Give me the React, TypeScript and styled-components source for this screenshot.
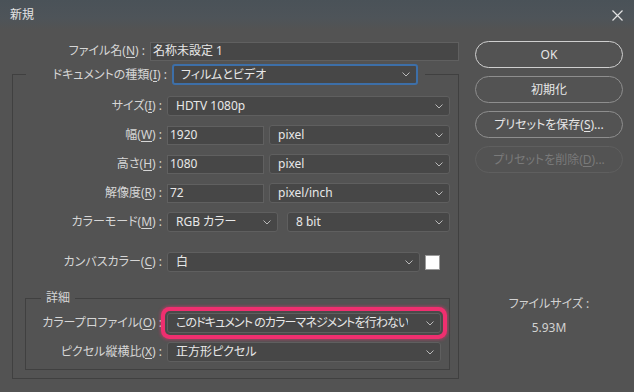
import React from 'react';
import styled, { createGlobalStyle, css } from 'styled-components';

const Global = createGlobalStyle`
  html, body { margin: 0; padding: 0; background: #535353; }
  body { font-family: "Noto Sans", "Noto Sans CJK JP", sans-serif; }
  #root { width: 634px; height: 392px; }
`;

const Window = styled.div`
  width: 634px;
  height: 392px;
  background: #535353;
  color: #d4d4d4;
  font-size: 12px;
  line-height: 16px;
  font-family: "Noto Sans", "Noto Sans CJK JP", sans-serif;
  font-feature-settings: "palt";
  overflow: hidden;
  display: flex;
  flex-direction: column;
`;

const TitleBar = styled.div`
  height: 30px;
  flex: none;
  display: flex;
  align-items: center;
  justify-content: space-between;
  padding: 0 11px 0 10px;
  background: linear-gradient(to bottom, #4a5258 0%, #4e5459 60%, #535353 100%);
  color: #e4e4e4;
`;

const Title = styled.span`
  font-size: 12px;
`;

const Body = styled.div`
  display: flex;
  padding: 11px 0 0 12px;
`;

const LeftCol = styled.div`
  width: 447px;
  display: flex;
  flex-direction: column;
`;

const Row = styled.div<{ $top?: number }>`
  display: flex;
  align-items: center;
  height: 20px;
  margin-top: ${(p) => p.$top ?? 0}px;
`;

const Label = styled.label<{ $w: number }>`
  width: ${(p) => p.$w}px;
  flex: none;
  box-sizing: border-box;
  text-align: right;
  padding-right: 5px;
  white-space: nowrap;
  color: #d6d6d6;
  u { text-underline-offset: 2px; }
`;

const TextInput = styled.div<{ $w: number }>`
  width: ${(p) => p.$w}px;
  height: 19px;
  flex: none;
  box-sizing: border-box;
  border: 1px solid #606060;
  background: #474747;
  color: #e8e8e8;
  padding-left: 2px;
  display: flex;
  align-items: center;
`;

const Select = styled.div<{ $w: number; $focus?: boolean; $hl?: boolean; $ml?: number }>`
  width: ${(p) => p.$w}px;
  height: 20px;
  flex: none;
  box-sizing: border-box;
  margin-left: ${(p) => p.$ml ?? 0}px;
  border: 1px solid #5f5f5f;
  border-radius: 3px;
  background: #474747;
  color: #e8e8e8;
  padding: 0 6px 0 8px;
  display: flex;
  align-items: center;
  justify-content: space-between;
  white-space: nowrap;
  ${(p) =>
    p.$focus &&
    css`
      border: 2px solid #3d6fa8;
      height: 21px;
      padding-left: 7px;
    `}
  ${(p) =>
    p.$hl &&
    css`
      box-shadow: 0 0 0 2px #4a4a4a, 0 0 0 6px #ef2f6f, 0 0 3px 7px rgba(239, 47, 111, 0.45);
    `}
`;

const SelectText = styled.span<{ $tight?: boolean }>`
  overflow: hidden;
  min-width: 0;
  letter-spacing: ${(p) => (p.$tight ? '-0.9px' : '0')};
`;

const Swatch = styled.div`
  width: 15px;
  height: 15px;
  margin-left: 5px;
  box-sizing: border-box;
  background: #ffffff;
  border: 1px solid #9a9a9a;
  flex: none;
`;

const Chevron = () => (
  <svg width="8" height="5" viewBox="0 0 8 5" style={{ flex: 'none', marginLeft: 4 }}>
    <path d="M0.5 0.5 L4 4 L7.5 0.5" fill="none" stroke="#b9b9b9" strokeWidth="1" />
  </svg>
);

const OuterGroup = styled.fieldset`
  margin: 3px 0 0 0;
  padding: 11px 8px 8px 0;
  width: 447px;
  box-sizing: border-box;
  border: 1px solid #404040;
  min-width: 0;
  display: flex;
  flex-direction: column;
  gap: 9px;
`;

const OuterLegend = styled.legend`
  margin-left: 13px;
  padding: 0 7px 0 0;
  display: flex;
  align-items: center;
  height: 21px;
`;

const InnerGroup = styled.fieldset`
  margin: 9px 0 0 12px;
  padding: 7px 8px 7px 0;
  width: 425px;
  box-sizing: border-box;
  border: 1px solid #404040;
  min-width: 0;
  display: flex;
  flex-direction: column;
  gap: 9px;
`;

const InnerLegend = styled.legend`
  margin-left: 15px;
  padding: 0 5px;
  color: #d6d6d6;
  line-height: 16px;
`;

const RightCol = styled.div`
  width: 148px;
  margin-left: 16px;
  display: flex;
  flex-direction: column;
  gap: 8px;
`;

const Button = styled.div<{ $primary?: boolean; $disabled?: boolean }>`
  height: 27px;
  box-sizing: border-box;
  border-radius: 14px;
  border: 1px solid ${(p) => (p.$primary ? '#cfcfcf' : p.$disabled ? '#5f5f5f' : '#8e8e8e')};
  color: ${(p) => (p.$disabled ? '#7a7a7a' : '#e6e6e6')};
  display: flex;
  align-items: center;
  justify-content: center;
  font-size: 12px;
  u { text-underline-offset: 2px; }
`;

const Info = styled.div`
  margin-top: 115px;
  display: flex;
  flex-direction: column;
  align-items: center;
  gap: 8px;
  color: #d2d2d2;
`;

const CloseIcon = () => (
  <svg width="11" height="11" viewBox="0 0 11 11">
    <path d="M0.5 0.5 L10.5 10.5 M10.5 0.5 L0.5 10.5" stroke="#e2e2e2" strokeWidth="1.2" fill="none" />
  </svg>
);

type Opt = { w: number; text: string; ml?: number; focus?: boolean; hl?: boolean; tight?: boolean };

const Dropdown = ({ w, text, ml, focus, hl, tight }: Opt) => (
  <Select $w={w} $ml={ml} $focus={focus} $hl={hl}>
    <SelectText $tight={tight}>{text}</SelectText>
    <Chevron />
  </Select>
);

export default function App() {
  return (
    <>
      <Global />
      <Window>
        <TitleBar>
          <Title>新規</Title>
          <CloseIcon />
        </TitleBar>
        <Body>
          <LeftCol>
            <Row>
              <Label $w={138}>
                ファイル名(<u>N</u>) :
              </Label>
              <TextInput $w={309}>名称未設定 1</TextInput>
            </Row>
            <OuterGroup>
              <OuterLegend>
                <Label $w={146}>
                  ドキュメントの種類(<u>I</u>) :
                </Label>
                <Dropdown w={246} text="フィルムとビデオ" focus />
              </OuterLegend>
              <Row>
                <Label $w={154}>
                  サイズ(<u>I</u>) :
                </Label>
                <Dropdown w={283} text="HDTV 1080p" />
              </Row>
              <Row>
                <Label $w={154}>
                  幅(<u>W</u>) :
                </Label>
                <TextInput $w={97}>1920</TextInput>
                <Dropdown w={181} ml={5} text="pixel" />
              </Row>
              <Row>
                <Label $w={154}>
                  高さ(<u>H</u>) :
                </Label>
                <TextInput $w={97}>1080</TextInput>
                <Dropdown w={181} ml={5} text="pixel" />
              </Row>
              <Row>
                <Label $w={154}>
                  解像度(<u>R</u>) :
                </Label>
                <TextInput $w={97}>72</TextInput>
                <Dropdown w={181} ml={5} text="pixel/inch" />
              </Row>
              <Row>
                <Label $w={154}>
                  カラーモード(<u>M</u>) :
                </Label>
                <Dropdown w={111} text="RGB カラー" />
                <Dropdown w={163} ml={9} text="8 bit" />
              </Row>
              <Row $top={11}>
                <Label $w={154}>
                  カンバスカラー(<u>C</u>) :
                </Label>
                <Dropdown w={253} text="白" />
                <Swatch />
              </Row>
              <InnerGroup>
                <InnerLegend>詳細</InnerLegend>
                <Row>
                  <Label $w={141}>
                    カラープロファイル(<u>O</u>) :
                  </Label>
                  <Dropdown w={274} hl tight text="このドキュメント のカラーマネジメントを行わない" />
                </Row>
                <Row>
                  <Label $w={141}>
                    ピクセル縦横比(<u>X</u>) :
                  </Label>
                  <Dropdown w={274} text="正方形ピクセル" />
                </Row>
              </InnerGroup>
            </OuterGroup>
          </LeftCol>
          <RightCol>
            <Button $primary>OK</Button>
            <Button>初期化</Button>
            <Button>
              プリセットを保存(<u>S</u>)...
            </Button>
            <Button $disabled>
              プリセットを削除(<u>D</u>)...
            </Button>
            <Info>
              <span>ファイルサイズ :</span>
              <span>5.93M</span>
            </Info>
          </RightCol>
        </Body>
      </Window>
    </>
  );
}
